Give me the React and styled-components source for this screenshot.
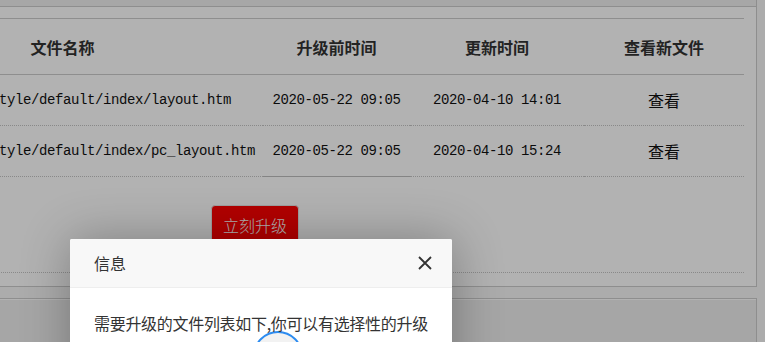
import styled, { createGlobalStyle } from 'styled-components';

const GlobalStyle = createGlobalStyle`
  html, body { margin: 0; padding: 0; }
  body {
    background: #f6f6f6;
    font-family: "Noto Sans CJK SC", "Noto Sans", sans-serif;
    color: #333;
    overflow: hidden;
  }
`;

const cols = '401px 147px 174px 160px';

const Page = styled.div`
  position: relative;
  width: 765px;
  height: 342px;
  overflow: hidden;
`;

const Panel = styled.div`
  margin-left: -151px;
  margin-top: ${p => p.$top || 0}px;
  width: 908px;
  box-sizing: border-box;
  border: 1px solid #ccc;
  background: #fff;
`;

const PanelHead = styled.div`
  height: ${p => p.$h || 36}px;
  background: ${p => p.$bg || '#f0f0f0'};
  border-bottom: 1px solid #ccc;
  box-shadow: inset 1px 1px 0 #fff;
`;

const PanelBody = styled.div`
  padding: 11px 12px 13px;
`;

const Table = styled.div`
  border-top: 1px solid #ccc;
`;

const HeadRow = styled.div`
  display: grid;
  grid-template-columns: ${cols};
  height: 55px;
  border-bottom: 1px solid #ccc;
`;

const HeadCell = styled.div`
  display: flex;
  align-items: center;
  justify-content: center;
  font-size: 16px;
  font-weight: bold;
  color: #333;
`;

const Row = styled.div`
  display: grid;
  grid-template-columns: ${cols};
`;

const Cell = styled.div`
  height: 50px;
  display: flex;
  align-items: center;
  justify-content: ${p => (p.$left ? 'flex-start' : 'center')};
  padding-left: ${p => (p.$left ? '9px' : '0')};
  border-bottom: 1px ${p => (p.$solid ? 'solid #bdbdbd' : 'dotted #c4c4c4')};
  white-space: nowrap;
  font-size: 16px;
  color: #111;
`;

const Mono = styled.span`
  font-family: "Liberation Mono", "DejaVu Sans Mono", monospace;
  font-size: 14px;
  letter-spacing: -0.4px;
  color: #111;
`;

const ButtonArea = styled.div`
  padding: 28px 0 27px 349px;
  border-bottom: 1px dotted #c4c4c4;
`;

const UpgradeButton = styled.button`
  box-sizing: border-box;
  width: 88px;
  height: 40px;
  border: 1px solid #e4e4e4;
  border-radius: 4px;
  background: #ff0000;
  color: #fff;
  font-family: "Noto Sans CJK SC", sans-serif;
  font-size: 16px;
  font-weight: 300;
  padding: 0;
`;

const Shade = styled.div`
  position: absolute;
  inset: 0;
  background: rgba(0, 0, 0, 0.3);
  z-index: 1;
`;

const Dialog = styled.div`
  position: absolute;
  left: 70px;
  top: 239px;
  width: 382px;
  height: 200px;
  background: #fff;
  border-radius: 2px;
  box-shadow: 1px 1px 50px rgba(0, 0, 0, 0.3);
  z-index: 2;
`;

const DialogHead = styled.div`
  height: 48px;
  display: flex;
  align-items: center;
  justify-content: space-between;
  padding: 0 20px 0 24px;
  background: #f8f8f8;
  border-bottom: 1px solid #eee;
  border-radius: 2px 2px 0 0;
  font-size: 16px;
  color: #333;
`;

const DialogBody = styled.div`
  padding: 25px 10px 0 24px;
  font-size: 16px;
  line-height: 20px;
  letter-spacing: -0.3px;
  white-space: nowrap;
  color: #333;
`;

const Spinner = styled.div`
  margin: -2px 0 0 159px;
  width: 46px;
  height: 46px;
  border-radius: 50%;
  border: 2px solid #2d8cf0;
  background: #f2f2f2;
`;

const rows = [
  { file: '/template/home/style/default/index/layout.htm', before: '2020-05-22 09:05', after: '2020-04-10 14:01' },
  { file: '/template/home/style/default/index/pc_layout.htm', before: '2020-05-22 09:05', after: '2020-04-10 15:24' },
];

export default function App() {
  return (
    <>
      <GlobalStyle />
      <Page>
        <Panel $top={-31}>
          <PanelHead />
          <PanelBody>
            <Table>
              <HeadRow>
                <HeadCell>文件名称</HeadCell>
                <HeadCell>升级前时间</HeadCell>
                <HeadCell>更新时间</HeadCell>
                <HeadCell>查看新文件</HeadCell>
              </HeadRow>
              {rows.map((r, i) => {
                const last = i === rows.length - 1;
                return (
                  <Row key={r.file}>
                    <Cell $left><Mono>{r.file}</Mono></Cell>
                    <Cell $solid={last}><Mono>{r.before}</Mono></Cell>
                    <Cell><Mono>{r.after}</Mono></Cell>
                    <Cell>查看</Cell>
                  </Row>
                );
              })}
              <ButtonArea>
                <UpgradeButton>立刻升级</UpgradeButton>
              </ButtonArea>
            </Table>
          </PanelBody>
        </Panel>
        <Panel $top={11}>
          <PanelHead $h={60} $bg="#eeeeee" />
        </Panel>
        <Shade />
        <Dialog>
          <DialogHead>
            <span>信息</span>
            <svg width="14" height="14" viewBox="0 0 14 14">
              <path d="M1 1L13 13M13 1L1 13" stroke="#333" strokeWidth="1.8" fill="none" />
            </svg>
          </DialogHead>
          <DialogBody>
            需要升级的文件列表如下,你可以有选择性的升级
            <Spinner />
          </DialogBody>
        </Dialog>
      </Page>
    </>
  );
}
